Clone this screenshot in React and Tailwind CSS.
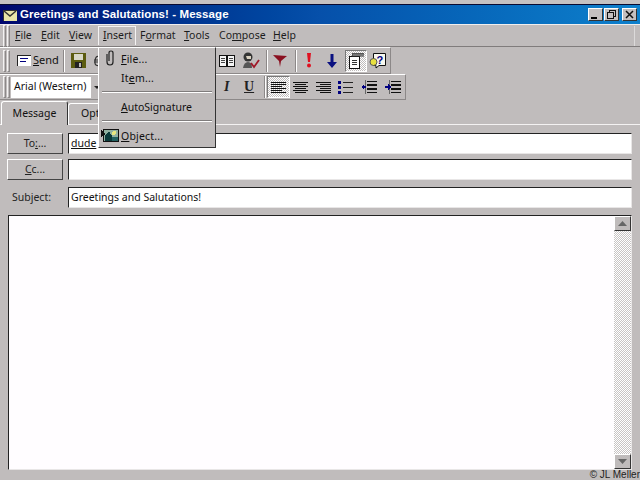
const Grip = () => (
  <div className="flex gap-[1px] h-[22px] w-[7px] shrink-0">
    <div className="w-[3px] h-full border-l border-t border-[#f4f2f2] border-r border-b border-r-[#8c8888] border-b-[#8c8888]" />
    <div className="w-[3px] h-full border-l border-t border-[#f4f2f2] border-r border-b border-r-[#8c8888] border-b-[#8c8888]" />
  </div>
);
const Sep = ({ className = "" }) => (
  <div className={"w-[2px] h-[22px] shrink-0 border-l border-[#8c8888] border-r border-r-white " + className} />
);
const Ic = ({ w = 16, h = 16, className = "", children }) => (
  <svg width={w} height={h} viewBox={`0 0 ${w} ${h}`} className={"shrink-0 " + className} shapeRendering="crispEdges">{children}</svg>
);
const MenuItem = ({ children, className = "" }) => (
  <span className={"text-[10.5px] text-[#101010] " + className}>{children}</span>
);
const Lines = ({ kind }) => {
  const rows = kind === "left"
    ? [[0, 15], [0, 15], [0, 11], [0, 15], [0, 11], [0, 15]]
    : kind === "center"
    ? [[0, 15], [2, 11], [0, 15], [2, 11], [0, 15], [2, 11]]
    : [[0, 15], [4, 11], [0, 15], [4, 11], [0, 15], [4, 11]];
  return (
    <Ic w={15} h={13}>
      {rows.map((r, i) => <rect key={i} x={r[0]} y={i * 2 + 1} width={r[1]} height="1" fill="#101010" />)}
    </Ic>
  );
};
const Indent = ({ out }) => (
  <Ic w={16} h={14}>
    <rect x="6" y="1" width="10" height="1" fill="#111" />
    <rect x="6" y="4" width="10" height="2" fill="#111" />
    <rect x="6" y="8" width="10" height="2" fill="#111" />
    <rect x="6" y="12" width="10" height="1" fill="#111" />
    <rect x="4" y="0" width="1" height="14" fill="#666" />
    {out ? <path d="M0 7 L3 4 V10Z" fill="#000080" /> : <path d="M3 4 L6 7 L3 10Z" fill="#000080" />}
    <rect x={out ? 1 : 0} y="6" width="4" height="2" fill="#000080" />
  </Ic>
);
const Win = ({ children }) => (
  <div className="w-[15px] h-[13px] bg-[#c4c0c0] border border-t-white border-l-white border-r-[#333] border-b-[#333] flex items-center justify-center">
    {children}
  </div>
);
const FormBtn = ({ children }) => (
  <div className="w-[56px] h-[21px] shrink-0 bg-[#bfbbbb] border border-t-white border-l-white border-r-[#444] border-b-[#444] flex items-center justify-center text-[10.5px] text-[#222]">
    {children}
  </div>
);
const Field = ({ children }) => (
  <div className="flex-1 h-[21px] bg-white border border-t-[#222] border-l-[#222] border-r-[#e8e6e6] border-b-[#e8e6e6] flex items-center pl-[2px] text-[10.5px] text-[#111] overflow-hidden">
    {children}
  </div>
);
const ScrollBtn = ({ up }) => (
  <div className="w-[17px] h-[15px] shrink-0 bg-[#bfbbbb] border border-t-white border-l-white border-r-[#333] border-b-[#333] flex items-center justify-center">
    <svg width="9" height="5" viewBox="0 0 9 5">
      <path d={up ? "M4.5 0 L9 5 H0Z" : "M0 0 H9 L4.5 5Z"} fill="#666" />
    </svg>
  </div>
);

export default function App() {
  return (
    <div className="relative w-[640px] h-[480px] overflow-hidden bg-[#c0bcbc] flex flex-col text-[#111]" style={{ fontFamily: '"Noto Sans","Open Sans",sans-serif' }}>
      <div className="h-[4px] shrink-0 bg-[#c6c2c2]" />
      {/* title */}
      <div className="h-[20px] shrink-0 border-t border-[#0a0a30] bg-gradient-to-r from-[#00066e] via-[#0650aa] to-[#0e80cc] flex items-center pl-[3px] pr-[3px]">
        <Ic w={14} h={11} className="mr-[3px] mt-[1px]">
          <rect x="0" y="0" width="14" height="11" fill="#e8e4a8" stroke="#333" />
          <path d="M1 1 L7 6 L13 1" fill="none" stroke="#333" strokeWidth="1.5" shapeRendering="auto" />
        </Ic>
        <span className="text-white text-[11.5px] font-bold mt-[1px] tracking-[0.1px] whitespace-nowrap" style={{ fontFamily: '"Liberation Sans",sans-serif' }}>Greetings and Salutations! - Message</span>
        <div className="ml-auto flex items-center">
          <Win><div className="w-[6px] h-[2px] bg-black mt-[6px] mr-[3px]" /></Win>
          <div className="w-[1px]" />
          <Win>
            <svg width="9" height="9" viewBox="0 0 9 9" shapeRendering="crispEdges"><path d="M2.5 2.5V.5H8.5V6.5H6.5M.5 2.5H6.5V8.5H.5Z" fill="none" stroke="#111" /></svg>
          </Win>
          <div className="w-[3px]" />
          <Win>
            <svg width="9" height="9" viewBox="0 0 9 9"><path d="M1 1L8 8M8 1L1 8" stroke="#111" strokeWidth="1.5" /></svg>
          </Win>
        </div>
      </div>
      {/* menu bar */}
      <div className="h-[23px] shrink-0 border-t border-[#f0eeee] border-b border-b-[#807c7c] flex items-center pl-[3px]">
        <Grip />
        <div className="flex items-center ml-[5px] text-[10.5px] text-[#1c1c1c]">
          <span className="w-[26px]"><u>F</u>ile</span>
          <span className="w-[28px]"><u>E</u>dit</span>
          <span className="w-[29px]"><u>V</u>iew</span>
          <span className="w-[38px] h-[19px] pl-[4px] border border-[#f4f2f2] border-b-0 flex items-center"><u>I</u>nsert</span>
          <span className="w-[44px] ml-[4px]">F<u>o</u>rmat</span>
          <span className="w-[35px]"><u>T</u>ools</span>
          <span className="w-[54px]">Co<u>m</u>pose</span>
          <span><u>H</u>elp</span>
        </div>
        <div className="ml-auto mr-[5px] w-[1px] h-[20px] bg-[#dcdada]" />
      </div>
      {/* toolbar 1 */}
      <div className="h-[27px] shrink-0 flex">
        <div className="w-[391px] h-full flex items-center pl-[3px] border-b border-[#8c8888] border-r border-r-[#8c8888] border-t border-t-white">
          <Grip />
          <div className="w-[48px] ml-[2px] flex items-center text-[10.5px] pl-[5px]">
            <Ic w={14} h={11} className="mr-[2px]">
              <rect x="0" y="0" width="14" height="11" fill="#fff" stroke="#222" />
              <rect x="3" y="3" width="8" height="1" fill="#000080" />
              <rect x="3" y="6" width="6" height="1" fill="#000080" />
            </Ic>
            <span className="text-[11px]"><u>S</u>end</span>
          </div>
          <Sep className="ml-[3px]" />
          <Ic w={15} h={15} className="ml-[6px]">
            <rect x="0" y="0" width="15" height="15" fill="#5c5c10" />
            <rect x="3" y="1" width="9" height="6" fill="#d8d8c8" />
            <rect x="4" y="9" width="7" height="6" fill="#222" />
            <rect x="8" y="10" width="2" height="4" fill="#c0bcbc" />
          </Ic>
          <svg width="8" height="12" viewBox="0 0 8 12" className="ml-[7px] shrink-0">
            <path d="M7 2.5Q5.5 1 4 1.5T2 6T4 10.5T7 9.5M1 5H6M1 7H5" fill="none" stroke="#333" strokeWidth="1.2" />
          </svg>
          <div className="w-[117px] shrink-0" />
          <Ic w={16} h={13} className="ml-[1px]">
            <path d="M0.5 1.5H7.5V12.5H0.5ZM8.5 1.5H15.5V12.5H8.5Z" fill="#f4f4f4" stroke="#111" />
            <path d="M2 4H6M2 6H6M2 8H6M10 4H14M10 6H14M10 8H14" stroke="#444" />
          </Ic>
          <svg width="19" height="17" viewBox="0 0 19 17" className="ml-[7px] shrink-0">
            <circle cx="6" cy="5" r="4.5" fill="#333" />
            <path d="M4 4h5v3H5z" fill="#d8d0c0" />
            <path d="M1 16q1-6 5-6t4 6" fill="#555" />
            <path d="M9 11l3 4 5-7" fill="none" stroke="#a01828" strokeWidth="1.8" />
          </svg>
          <Sep className="ml-[5px]" />
          <svg width="14" height="13" viewBox="0 0 14 13" className="ml-[5px] shrink-0">
            <path d="M0 1L14 2L8 7L7 13L6 7Z" fill="#8a1020" />
          </svg>
          <Sep className="ml-[8px]" />
          <svg width="6" height="15" viewBox="0 0 6 15" className="ml-[9px] shrink-0">
            <path d="M1 0H5L4 9H2Z" fill="#e01020" />
            <circle cx="3" cy="12.5" r="2" fill="#e01020" />
          </svg>
          <svg width="10" height="14" viewBox="0 0 10 14" className="ml-[15px] shrink-0">
            <path d="M3.5 0H6.5V8H10L5 14L0 8H3.5Z" fill="#0a1080" />
          </svg>
          <div className="ml-[8px] w-[22px] h-[22px] flex items-center justify-center border border-t-[#777] border-l-[#777] border-r-white border-b-white bg-[repeating-conic-gradient(#c0bcbc_0_25%,#fff_0_50%)] bg-[length:2px_2px]">
            <svg width="15" height="16" viewBox="0 0 15 16" shapeRendering="crispEdges">
              <path d="M.5 3.5H10.5V15.5H.5Z" fill="#fff" stroke="#111" />
              <rect x="3" y="0" width="12" height="3" fill="#777" stroke="#333" strokeWidth=".5" />
              <path d="M3 7H8M3 9H8M3 11H8" stroke="#333" />
            </svg>
          </div>
          <svg width="17" height="16" viewBox="0 0 17 16" className="ml-[2px] shrink-0">
            <path d="M4.5.5H16.5V12.5H10L7 15V12.5H4.5Z" fill="#f8f8f0" stroke="#111" />
            <circle cx="4.5" cy="9" r="3.5" fill="#e8e040" stroke="#555" />
            <text x="7.5" y="10.5" fontSize="11" fontWeight="bold" fill="#000080" fontFamily="Liberation Sans">?</text>
          </svg>
        </div>
      </div>
      {/* toolbar 2 */}
      <div className="h-[26px] shrink-0 flex">
        <div className="w-[406px] h-full flex items-center pl-[3px] border-b border-[#8c8888] border-r border-r-[#8c8888] border-t border-t-white">
          <Grip />
          <div className="w-[80px] ml-[1px] h-[21px] bg-white flex items-center pl-[3px] text-[10.5px] whitespace-nowrap">Arial (Western)</div>
          <svg width="6" height="3" viewBox="0 0 6 3" className="ml-[3px] shrink-0"><path d="M0 0H6L3 3Z" fill="#222" /></svg>
          <div className="w-[124px] shrink-0" />
          <span className="w-[10px] font-bold italic text-[14px] leading-none text-[#222]" style={{ fontFamily: '"Liberation Serif",serif' }}>I</span>
          <span className="w-[12px] ml-[10px] font-bold underline text-[14px] leading-none text-[#222]" style={{ fontFamily: '"Liberation Serif",serif' }}>U</span>
          <Sep className="ml-[8px]" />
          <div className="ml-[1px] w-[23px] h-[22px] flex items-center justify-center border border-t-[#777] border-l-[#777] border-r-white border-b-white bg-[repeating-conic-gradient(#c0bcbc_0_25%,#fff_0_50%)] bg-[length:2px_2px]">
            <Lines kind="left" />
          </div>
          <div className="ml-[3px]"><Lines kind="center" /></div>
          <div className="ml-[8px]"><Lines kind="right" /></div>
          <Ic w={15} h={14} className="ml-[7px]">
            <rect x="0" y="1" width="3" height="3" fill="#000080" />
            <rect x="0" y="6" width="3" height="3" fill="#000080" />
            <rect x="0" y="11" width="3" height="3" fill="#000080" />
            <rect x="5" y="2" width="10" height="1" fill="#222" />
            <rect x="5" y="7" width="10" height="1" fill="#222" />
            <rect x="5" y="12" width="10" height="1" fill="#222" />
          </Ic>
          <div className="ml-[8px]"><Indent out /></div>
          <div className="ml-[8px]"><Indent /></div>
        </div>
      </div>
      {/* tabs */}
      <div className="h-[25px] shrink-0 flex items-end pl-[1px] border-b border-[#f4f2f2]">
        <div className="w-[67px] h-[24px] -mb-[1px] bg-[#c0bcbc] border border-white border-b-0 border-r-[#333] rounded-t-[3px] flex items-center justify-center text-[10.5px]">Message</div>
        <div className="w-[70px] h-[21px] border border-white border-b-0 border-r-[#333] rounded-t-[3px] flex items-center pl-[12px] text-[10.5px]">Opt</div>
      </div>
      {/* form */}
      <div className="flex-1 flex flex-col pl-[7px] pr-[8px] pt-[8px] min-h-0">
        <div className="flex gap-[5px] items-center">
          <FormBtn><span>To<u>:</u>...</span></FormBtn>
          <Field><u>dude</u></Field>
        </div>
        <div className="flex gap-[5px] items-center mt-[5px]">
          <FormBtn><span><u>C</u>c...</span></FormBtn>
          <Field />
        </div>
        <div className="flex gap-[5px] items-center mt-[7px]">
          <div className="w-[56px] h-[21px] shrink-0 flex items-center pl-[5px] text-[10.5px] text-[#222]">Subject:</div>
          <Field>Greetings and Salutations!</Field>
        </div>
        <div className="h-[255px] mt-[7px] ml-[1px] bg-[#fffdff] border border-t-[#222] border-l-[#222] border-r-[#e8e6e6] border-b-[#e8e6e6] flex justify-end">
          <div className="w-[17px] h-full flex flex-col bg-[repeating-conic-gradient(#c8c4c4_0_25%,#fff_0_50%)] bg-[length:2px_2px]">
            <ScrollBtn up />
            <div className="flex-1" />
            <ScrollBtn />
          </div>
        </div>
      </div>
      <div className="absolute right-0 bottom-0 h-[10px] leading-[10px] text-[10px] text-[#222] whitespace-nowrap" style={{ fontFamily: '"Liberation Sans",sans-serif' }}>© JL Meller</div>
      {/* dropdown */}
      <div className="absolute left-[98px] top-[47px] w-[118px] h-[101px] bg-[#bfbbbb] border border-t-white border-l-white border-r-[#333] border-b-[#333] flex flex-col">
        <div className="h-[20px] flex items-center">
          <svg width="10" height="16" viewBox="0 0 10 16" className="ml-[6px] shrink-0">
            <path d="M2 4V12Q2 15 5 15T8 12V3Q8 1 6 1T4 3V11" fill="none" stroke="#222" strokeWidth="1.2" />
          </svg>
          <MenuItem className="ml-[6px] mt-[3px] tracking-[0.2px]"><u>F</u>ile...</MenuItem>
        </div>
        <div className="h-[19px] flex items-center"><MenuItem className="ml-[22px] mt-[2px] tracking-[0.2px]">It<u>e</u>m...</MenuItem></div>
        <div className="h-[2px] mx-[3px] mt-[4px] border-t border-[#7f7c7c] border-b border-b-white" />
        <div className="h-[25px] flex items-center mt-[1px]"><MenuItem className="ml-[22px] mt-[2px] text-[10.2px]"><u>A</u>utoSignature</MenuItem></div>
        <div className="h-[2px] mx-[3px] mt-[1px] border-t border-[#7f7c7c] border-b border-b-white" />
        <div className="h-[24px] flex items-center mt-[1px]">
          <svg width="18" height="13" viewBox="0 0 18 13" className="ml-[2px] shrink-0" shapeRendering="crispEdges">
            <rect x="2.5" y=".5" width="15" height="12" fill="#90b0a0" stroke="#111" />
            <path d="M8 2L4 7V12H11V7Z" fill="#0a3a3a" />
            <circle cx="13" cy="4" r="2" fill="#e8e880" />
            <rect x="11" y="8" width="6" height="4" fill="#206060" />
            <path d="M0 1L5 5L2 6L0 8Z" fill="#111" />
          </svg>
          <MenuItem className="ml-[2px] mt-[3px] tracking-[0.2px]"><u>O</u>bject...</MenuItem>
        </div>
      </div>
    </div>
  );
}
